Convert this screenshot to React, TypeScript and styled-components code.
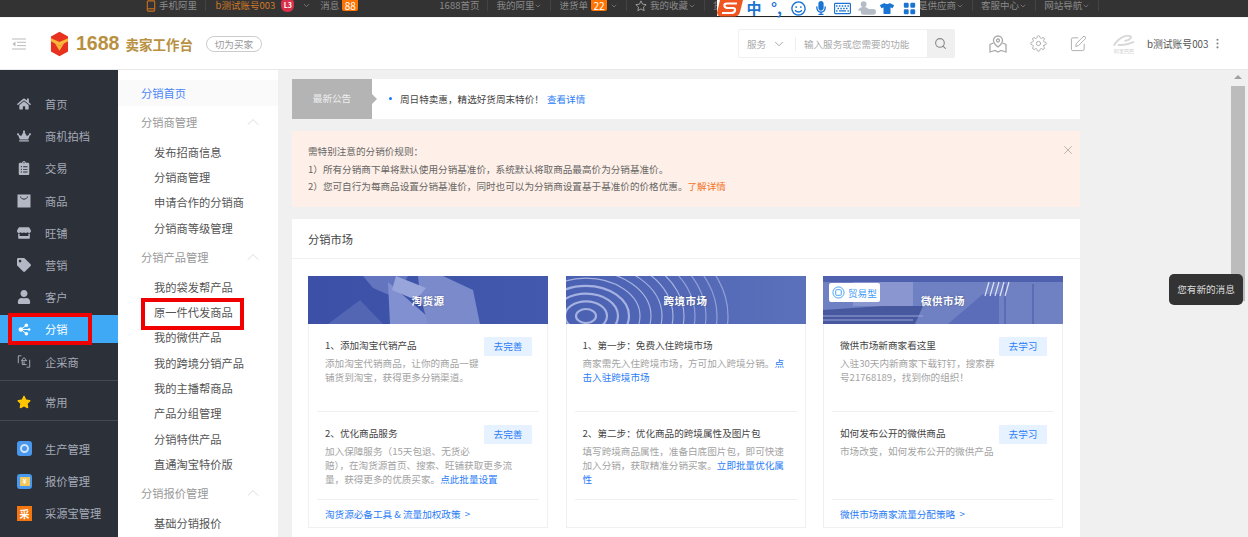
import React from 'react';
import styled, { createGlobalStyle } from 'styled-components';
import { FaHome, FaCrown, FaClipboardList, FaStore, FaTag, FaUser, FaStar, FaRegSmile, FaMicrophone, FaRegKeyboard, FaTshirt } from 'react-icons/fa';
import { BsGridFill } from 'react-icons/bs';
import { FiChevronDown, FiChevronUp, FiSearch, FiSettings, FiEdit, FiX, FiMoreVertical } from 'react-icons/fi';

const GlobalStyle = createGlobalStyle`
    html, body {
        margin: 0;
        padding: 0;
        height: 537px;
        overflow: hidden;
        background: #f0f0f0;
        font-family: "Noto Sans CJK SC", "Liberation Sans", sans-serif;
        font-size: 9.6px;
    }
    * { box-sizing: border-box; }
`;

function BagIcon() {
    return (
        <svg viewBox="0 0 14 14" width="14" height="14">
            <path d="M0.5 0.5h13v13h-13z" fill="currentColor" />
            <path d="M3.5 2.5c0.5 3.5 6.5 3.5 7 0" fill="none" stroke="#2c3039" strokeWidth="1" />
        </svg>
    );
}

function ShareIcon() {
    return (
        <svg viewBox="0 0 14 14" width="13" height="13" fill="#fff">
            <circle cx="3" cy="7" r="2.4" />
            <circle cx="9" cy="2.5" r="1.9" />
            <circle cx="9" cy="11.5" r="1.9" />
            <circle cx="12" cy="7" r="1.4" />
            <path d="M3 7L9 2.5M3 7L9 11.5M3 7H12" stroke="#fff" strokeWidth="1" />
        </svg>
    );
}

function BracketIcon() {
    return (
        <svg viewBox="0 0 16 16" width="15" height="15" fill="none" stroke="currentColor" strokeWidth="1">
            <path d="M5 1.5H1.5V10M11 14.5h3.5V6" />
            <path d="M8 3.5L5 7h6zM6 7.5v4h5M8 8v3" />
        </svg>
    );
}

const sideMain = [
    { label: '首页', icon: <FaHome /> },
    { label: '商机拍档', icon: <FaCrown /> },
    { label: '交易', icon: <FaClipboardList /> },
    { label: '商品', icon: <BagIcon /> },
    { label: '旺铺', icon: <FaStore /> },
    { label: '营销', icon: <FaTag /> },
    { label: '客户', icon: <FaUser /> },
    { label: '分销', icon: <ShareIcon />, active: true },
    { label: '企采商', icon: <BracketIcon /> },
];

const subGroups = [
    { title: '分销商管理', items: ['发布招商信息', '分销商管理', '申请合作的分销商', '分销商等级管理'] },
    { title: '分销产品管理', items: ['我的袋发帮产品', '原一件代发商品', '我的微供产品', '我的跨境分销产品', '我的主播帮商品', '产品分组管理', '分销特供产品', '直通淘宝特价版'] },
    { title: '分销报价管理', items: ['基础分销报价'] },
];

const ripples = [10, 21, 32, 43, 54, 65, 76, 87, 98, 109, 120, 131, 142];

const App: React.FC = () => {
    return (
        <Page>
            <GlobalStyle />
            <TopBar>
                <TopItem>
                    <PhoneMark viewBox="0 0 10 13" width="10" height="12">
                        <rect x="1" y="1" width="8" height="11" rx="1" />
                        <path d="M1 9.5h8" />
                    </PhoneMark>
                    手机阿里
                </TopItem>
                <AccountItem>
                    <OrangeText>b测试账号003</OrangeText>
                    <LevelBadge>L3</LevelBadge>
                    <AccountChevron size={9} />
                    消息
                    <CountBadge>88</CountBadge>
                </AccountItem>
                <TopSpacer />
                <TopItem>1688首页</TopItem>
                <TopItem>我的阿里<FiChevronDown size={8} /></TopItem>
                <TopItem>进货单<CountBadge>22</CountBadge><FiChevronDown size={8} /></TopItem>
                <TopItem>
                    <StarMark viewBox="0 0 14 14" width="12" height="12">
                        <path d="M7 1l1.8 3.900 4.200.5-3.100 2.900.8 4.200L7 10.400 3.300 12.500l.8-4.200L1 5.400l4.200-.5z" />
                    </StarMark>
                    我的收藏<FiChevronDown size={8} />
                </TopItem>
                <HiddenItem>货源采购</HiddenItem>
                <TopItem>我是供应商<FiChevronDown size={8} /></TopItem>
                <TopItem>客服中心<FiChevronDown size={8} /></TopItem>
                <TopItem>网站导航<FiChevronDown size={8} /></TopItem>
            </TopBar>

            <ImeBar>
                <ImeLogo viewBox="0 0 26 17" width="26" height="17">
                    <path d="M3 0H26L23 12Q22 16 18 16.500H4Q1 16.500 0 13Z" fill="#f0561f" />
                    <path d="M20 3.500H10Q7 3.500 7.500 6Q8 8 11 8H16Q18.500 8 18 10.500Q17.500 13 14 13H5" fill="none" stroke="#fff" strokeWidth="2.200" />
                </ImeLogo>
                <ImeSlot $width={24}><ImeChar>中</ImeChar></ImeSlot>
                <ImeSlot $width={21}><ImeChar>°,</ImeChar></ImeSlot>
                <ImeSlot $width={23}><FaRegSmile size={15} /></ImeSlot>
                <ImeSlot $width={22}><FaMicrophone size={14} /></ImeSlot>
                <ImeSlot $width={21}><FaRegKeyboard size={17} /></ImeSlot>
                <ImeSlot $width={27}>
                    <svg viewBox="0 0 20 14" width="19" height="14" fill="#b4bcc6">
                        <circle cx="7" cy="3" r="3" />
                        <path d="M1 10q1-4 6-4t6 4z" />
                        <rect x="4" y="8" width="16" height="6" rx="3" />
                    </svg>
                </ImeSlot>
                <ImeSlot $width={14}><FaTshirt size={15} /></ImeSlot>
                <ImeSlot $width={30}><BsGridFill size={13} /></ImeSlot>
            </ImeBar>

            <Header>
                <MenuToggle viewBox="0 0 14 12" width="14" height="12">
                    <path d="M0 1h14M5 4.300h9M5 7.600h9M0 11h14" stroke="#bbb" strokeWidth="1" />
                    <path d="M3.500 3.500L0.500 6l3 2.500z" fill="#bbb" />
                </MenuToggle>
                <svg viewBox="0 0 20 26" width="19" height="26">
                    <path d="M10 0L19 5V21L10 26L1 21V5Z" fill="#e6321f" />
                    <path d="M1 7L10 11L19 7V10L10 15L1 10Z" fill="#f6b73c" />
                    <path d="M5 12L10 20L15 12L10 15Z" fill="#f6b73c" />
                </svg>
                <Brand>1688</Brand>
                <BrandSub>卖家工作台</BrandSub>
                <SwitchTag>切为买家</SwitchTag>
                <SearchBox>
                    <SearchScope>服务<FiChevronDown size={14} /></SearchScope>
                    <SearchInput>输入服务或您需要的功能</SearchInput>
                    <SearchButton><FiSearch size={13} /></SearchButton>
                </SearchBox>
                <HeaderIcons>
                    <svg viewBox="0 0 18 18" width="18" height="18" fill="none" stroke="#aaa" strokeWidth="1">
                        <path d="M9 1a4.500 4.500 0 0 1 4.500 4.500C13.500 8.500 9 12 9 12S4.500 8.500 4.500 5.500A4.500 4.500 0 0 1 9 1z" />
                        <circle cx="9" cy="5.500" r="1.500" />
                        <path d="M4.500 8L1 9.500V17L6 15.500L9 17L12 15.500L17 17V9.500L13.500 8" />
                    </svg>
                    <FiSettings size={17} />
                    <FiEdit size={17} />
                </HeaderIcons>
                <AliLogo>
                    <svg viewBox="0 0 24 14" width="23" height="14" fill="none" stroke="#d8d8d8" strokeWidth="2">
                        <path d="M2 12C6 4 15 0 19 2C21 3 19 6 13 7M6 11C12 12 18 10 23 8" />
                    </svg>
                    <AliText>阿里巴巴</AliText>
                </AliLogo>
                <UserName>b测试账号003</UserName>
                <FiMoreVertical size={13} color="#888" />
            </Header>

            <Body>
                <SideNav>
                    {sideMain.map(item => (
                        <SideItem key={item.label} $active={item.active}>
                            <SideIcon>{item.icon}</SideIcon>
                            {item.label}
                        </SideItem>
                    ))}
                    <SideDivider $after={7} />
                    <SideItem>
                        <SideIcon $color="#ffc600"><FaStar /></SideIcon>
                        常用
                    </SideItem>
                    <SideDivider $after={14} />
                    <SideItem>
                        <AppTile $color="#4a97ee"><TileDot /></AppTile>
                        生产管理
                    </SideItem>
                    <SideItem>
                        <AppTile $color="#4a97ee"><TileBubble>¥</TileBubble></AppTile>
                        报价管理
                    </SideItem>
                    <SideItem>
                        <AppTile $color="#f5760f" $square>采</AppTile>
                        采源宝管理
                    </SideItem>
                </SideNav>

                <SubNav>
                    <SubActive>分销首页</SubActive>
                    {subGroups.map(group => (
                        <div key={group.title}>
                            <SubTitle>
                                {group.title}
                                <FiChevronUp size={20} color="#ccc" strokeWidth={0.8} />
                            </SubTitle>
                            {group.items.map(item => <SubItem key={item}>{item}</SubItem>)}
                        </div>
                    ))}
                </SubNav>

                <Content>
                    <Notice>
                        <NoticeTag>最新公告</NoticeTag>
                        <NoticeDot />
                        <span>周日特卖惠，精选好货周末特价！</span>
                        <NoticeLink>查看详情</NoticeLink>
                    </Notice>

                    <Alert>
                        <div>需特别注意的分销价规则：</div>
                        <div>1）所有分销商下单将默认使用分销基准价，系统默认将取商品最高价为分销基准价。</div>
                        <div>2）您可自行为每商品设置分销基准价，同时也可以为分销商设置基于基准价的价格优惠。<AlertLink>了解详情</AlertLink></div>
                        <AlertClose><FiX size={14} strokeWidth={1} /></AlertClose>
                    </Alert>

                    <Panel>
                        <PanelTitle>分销市场</PanelTitle>
                        <CardRow>
                            <Card>
                                <Banner $bg="linear-gradient(90deg, #3b50a6, #4259ad)">
                                    <BannerArt viewBox="0 0 240 48" preserveAspectRatio="none">
                                        <path d="M20 48L52 24L75 48Z" fill="#5266b4" />
                                        <path d="M55 0H100L88 22L65 12Z" fill="#6375bf" />
                                        <path d="M80 6L128 48H82Z" fill="#8190d0" />
                                        <path d="M110 0H135L165 14L172 48H120L112 20Z" fill="#7a8acb" />
                                        <path d="M88 0L118 12L108 24L84 14Z" fill="#98a5da" />
                                    </BannerArt>
                                    <BannerTitle>淘货源</BannerTitle>
                                </Banner>
                                <CardBody>
                                    <CardRowItem>
                                        <ActionButton>去完善</ActionButton>
                                        <ItemTitle>1、添加淘宝代销产品</ItemTitle>
                                        <ItemDesc>添加淘宝代销商品，让你的商品一键铺货到淘宝，获得更多分销渠道。</ItemDesc>
                                    </CardRowItem>
                                    <CardRowItem>
                                        <ActionButton>去完善</ActionButton>
                                        <ItemTitle>2、优化商品服务</ItemTitle>
                                        <ItemDesc>加入保障服务（15天包退、无货必赔），在淘货源首页、搜索、旺铺获取更多流量，获得更多的优质买家。<BlueLink>点此批量设置</BlueLink></ItemDesc>
                                    </CardRowItem>
                                    <CardFooter>淘货源必备工具 &amp; 流量加权政策 &nbsp;&gt;</CardFooter>
                                </CardBody>
                            </Card>

                            <Card>
                                <Banner $bg="linear-gradient(90deg, #4a60b2, #5c71bb)">
                                    <BannerArt viewBox="0 0 240 48" preserveAspectRatio="xMidYMid slice">
                                        {ripples.map(r => (
                                            <ellipse key={r} cx="20" cy="40" rx={r} ry={r * 0.7} fill="none" stroke="#c3ccef" strokeWidth={r < 50 ? 2.2 : 1.2} opacity={r > 100 ? 0.55 : 0.75} />
                                        ))}
                                    </BannerArt>
                                    <BannerTitle>跨境市场</BannerTitle>
                                </Banner>
                                <CardBody>
                                    <CardRowItem>
                                        <ItemTitle>1、第一步：免费入住跨境市场</ItemTitle>
                                        <ItemDesc>商家需先入住跨境市场，方可加入跨境分销。<BlueLink>点击入驻跨境市场</BlueLink></ItemDesc>
                                    </CardRowItem>
                                    <CardRowItem>
                                        <ItemTitle>2、第二步：优化商品的跨境属性及图片包</ItemTitle>
                                        <ItemDesc>填写跨境商品属性，准备白底图片包，即可快速加入分销，获取精准分销买家。<BlueLink>立即批量优化属性</BlueLink></ItemDesc>
                                    </CardRowItem>
                                    <CardFooter />
                                </CardBody>
                            </Card>

                            <Card>
                                <Banner $bg="#6f80c3">
                                    <BannerArt viewBox="0 0 240 48" preserveAspectRatio="none">
                                        <path d="M0 0H240V6H0Z" fill="#4f61ae" />
                                        <path d="M30 6H90V30H30Z" fill="#8996d0" />
                                        <path d="M0 34L60 30H100L92 48H0Z" fill="#47589f" />
                                        <path d="M125 48L160 18H176V48Z" fill="#5b6db8" />
                                        <path d="M182 8V48M210 8V48" stroke="#5566b0" strokeWidth="1.500" />
                                        <path d="M162 20L166 6M167 20L171 6M172 20L176 6M177 20L181 6M182 20L186 6" stroke="#dfe4f5" strokeWidth="1.200" />
                                        <path d="M0 40H100M0 44H90" stroke="#9aa6d9" strokeWidth="1" />
                                    </BannerArt>
                                    <BannerTitle>微供市场</BannerTitle>
                                    <TradeBadge>
                                        <svg viewBox="0 0 14 14" width="13" height="13" fill="none" stroke="#3f9cf5" strokeWidth="1">
                                            <circle cx="7" cy="7" r="6" />
                                            <rect x="4" y="4" width="6" height="6" rx="1" />
                                        </svg>
                                        贸易型
                                    </TradeBadge>
                                </Banner>
                                <CardBody>
                                    <CardRowItem>
                                        <ActionButton>去学习</ActionButton>
                                        <ItemTitle>微供市场新商家看这里</ItemTitle>
                                        <ItemDesc>入驻30天内新商家下载钉钉，搜索群号21768189，找到你的组织！</ItemDesc>
                                    </CardRowItem>
                                    <CardRowItem>
                                        <ActionButton>去学习</ActionButton>
                                        <ItemTitle>如何发布公开的微供商品</ItemTitle>
                                        <ItemDesc>市场改变，如何发布公开的微供产品</ItemDesc>
                                    </CardRowItem>
                                    <CardFooter>微供市场商家流量分配策略 &nbsp;&gt;</CardFooter>
                                </CardBody>
                            </Card>
                        </CardRow>
                    </Panel>
                </Content>

                <ScrollTrack>
                    <ScrollArrow />
                    <ScrollThumb />
                </ScrollTrack>
            </Body>

            <MessageTip>您有新的消息</MessageTip>
            <RedMark $left={8} $top={313} $width={84} $height={32} />
            <RedMark $left={141} $top={298} $width={103} $height={32} />
        </Page>
    );
};

export default App;

const Page = styled.div`
    position: relative;
    width: 1248px;
    height: 537px;
    overflow: hidden;
    display: flex;
    flex-direction: column;
`;

const TopBar = styled.div`
    height: 18px;
    flex: none;
    padding-left: 137.5px;
    background: #333;
    color: #8a8a8a;
    font-size: 9.5px;
    display: flex;
    align-items: flex-start;
    border-bottom: 1px solid #f4f4f4;
`;

const TopItem = styled.div`
    height: 11px;
    line-height: 11px;
    padding: 0 7.5px 0 8.5px;
    display: flex;
    align-items: center;
    white-space: nowrap;
    border-right: 1px solid #444;
`;

const AccountItem = styled(TopItem)`
    padding-left: 10px;
    border-right: none;
`;

const TopSpacer = styled.div`
    width: 62px;
`;

const HiddenItem = styled(TopItem)`
    width: 195.5px;
`;

const PhoneMark = styled.svg`
    margin-right: 3px;
    fill: none;
    stroke: #c8701e;
    stroke-width: 1.2;
`;

const StarMark = styled.svg`
    margin-right: 3px;
    fill: none;
    stroke: #aaa;
    stroke-width: 1;
`;

const AccountChevron = styled(FiChevronDown)`
    margin: 0 9px 0 8px;
`;

const OrangeText = styled.span`
    color: #cf7a26;
`;

const LevelBadge = styled.span`
    width: 13px;
    height: 12px;
    margin-left: 6px;
    background: #d92f4a;
    color: #fff;
    font-size: 7px;
    font-weight: 700;
    text-align: center;
    border-radius: 2px 2px 6px 6px;
`;

const CountBadge = styled.span`
    height: 11px;
    line-height: 11px;
    padding: 0 2.5px;
    margin: 0 3px;
    background: #ff7300;
    color: #fff;
    font-size: 10px;
    border-radius: 0 0 2px 2px;
`;

const ImeBar = styled.div`
    position: absolute;
    left: 717px;
    top: 0;
    width: 203px;
    height: 16px;
    padding-left: 25px;
    display: flex;
    align-items: center;
    background: #fff;
    color: #1a74d2;
    box-shadow: 0 1px 0 #222;
`;

const ImeLogo = styled.svg`
    position: absolute;
    left: 0;
    top: 0;
`;

const ImeSlot = styled.span<{ $width: number }>`
    width: ${p => p.$width}px;
    flex: none;
    display: flex;
    align-items: center;
    justify-content: center;
`;

const ImeChar = styled.span`
    font-size: 15px;
    font-weight: 700;
    line-height: 16px;
`;

const Header = styled.div`
    height: 52px;
    flex: none;
    background: #fff;
    border-bottom: 1px solid #e8e8e8;
    display: flex;
    align-items: center;
    padding-left: 12px;
`;

const MenuToggle = styled.svg`
    margin-right: 24px;
`;

const Brand = styled.span`
    margin-left: 7px;
    font-family: "Liberation Sans", sans-serif;
    font-size: 19.5px;
    font-weight: 700;
    color: #b8903f;
`;

const BrandSub = styled.span`
    margin-left: 6px;
    font-size: 13.5px;
    font-weight: 700;
    color: #b8903f;
`;

const SwitchTag = styled.span`
    margin-left: 13px;
    width: 56px;
    height: 16px;
    line-height: 14px;
    text-align: center;
    color: #999;
    border: 1px solid #ccc;
    border-radius: 8px;
`;

const SearchBox = styled.div`
    margin-left: 476px;
    width: 217px;
    height: 29px;
    display: flex;
    align-items: center;
    color: #aaa;
    border: 1px solid #f0f0f0;
    border-radius: 2px;
`;

const SearchScope = styled.div`
    width: 57px;
    padding-left: 8px;
    display: flex;
    align-items: center;
    gap: 6px;
    border-right: 1px solid #eee;
    line-height: 12px;
    svg { color: #999; stroke-width: 1.5; }
`;

const SearchInput = styled.div`
    flex: 1;
    padding-left: 8px;
`;

const SearchButton = styled.div`
    width: 27px;
    height: 100%;
    background: #f0f0f0;
    color: #888;
    display: flex;
    align-items: center;
    justify-content: center;
`;

const HeaderIcons = styled.div`
    margin-left: 34px;
    display: flex;
    align-items: center;
    gap: 23px;
    color: #aaa;
    svg { stroke-width: 1.3; }
`;

const AliLogo = styled.div`
    margin-left: 25px;
    width: 24px;
    display: flex;
    flex-direction: column;
    align-items: center;
`;

const AliText = styled.span`
    font-size: 5px;
    line-height: 6px;
    color: #ccc;
`;

const UserName = styled.span`
    margin: 0 3px 0 11px;
    color: #555;
    font-size: 9.8px;
`;

const Body = styled.div`
    flex: 1;
    min-height: 0;
    display: flex;
`;

const SideNav = styled.nav`
    width: 118px;
    flex: none;
    padding-top: 20px;
    background: #2c3039;
    color: #a5aab7;
    font-size: 11.25px;
`;

const SideItem = styled.div<{ $active?: boolean }>`
    height: 28px;
    margin-bottom: 4.2px;
    padding-left: 17px;
    display: flex;
    align-items: center;
    background: ${p => (p.$active ? '#3fa9f5' : 'transparent')};
    color: ${p => (p.$active ? '#fff' : 'inherit')};
`;

const SideIcon = styled.span<{ $color?: string }>`
    width: 14px;
    margin-right: 14px;
    display: flex;
    justify-content: center;
    font-size: 14px;
    color: ${p => p.$color || '#b4b8c4'};
`;

const SideDivider = styled.div<{ $after: number }>`
    height: 1px;
    margin: 1px 0 ${p => p.$after}px;
    background: #45484f;
`;

const AppTile = styled.span<{ $color: string; $square?: boolean }>`
    width: 15px;
    height: 15px;
    margin-right: 13px;
    display: flex;
    align-items: center;
    justify-content: center;
    background: ${p => p.$color};
    border-radius: ${p => (p.$square ? '0' : '3px')};
    color: #fff;
    font-size: 10px;
    font-weight: 700;
    line-height: 15px;
`;

const TileDot = styled.span`
    width: 9px;
    height: 9px;
    border: 2px solid #cfe3fb;
    border-radius: 50%;
`;

const TileBubble = styled.span`
    width: 10px;
    height: 9px;
    background: #f3c65a;
    color: #fff;
    font-size: 7px;
    line-height: 9px;
    text-align: center;
`;

const SubNav = styled.aside`
    width: 160px;
    flex: none;
    padding-top: 10px;
    background: #fff;
    font-size: 11.25px;
    overflow: hidden;
`;

const SubActive = styled.div`
    height: 26px;
    margin-bottom: 1px;
    padding-left: 23px;
    line-height: 26px;
    background: #fafafa;
    color: #4a86f7;
`;

const SubTitle = styled.div`
    height: 25.3px;
    margin: 3.5px 0 5px;
    padding: 0 15px 0 23px;
    display: flex;
    align-items: center;
    justify-content: space-between;
    color: #999;
`;

const SubItem = styled.div`
    height: 25.3px;
    line-height: 25.3px;
    padding-left: 36px;
    color: #555;
`;

const Content = styled.main`
    width: 816px;
    flex: none;
    padding: 9px 14px 0;
    overflow: hidden;
`;

const Notice = styled.div`
    height: 40px;
    padding-bottom: 1px;
    display: flex;
    align-items: center;
    background: #fff;
    color: #444;
`;

const NoticeTag = styled.div`
    position: relative;
    width: 80px;
    height: 40px;
    line-height: 38px;
    text-align: center;
    background: #b4b4b4;
    color: #eee;
    &::after {
        content: '';
        position: absolute;
        left: 80px;
        top: 15px;
        border: 5px solid transparent;
        border-left-color: #b4b4b4;
    }
`;

const NoticeDot = styled.span`
    width: 3px;
    height: 3px;
    margin: 0 8px 0 17px;
    border-radius: 50%;
    background: #1677ff;
`;

const NoticeLink = styled.span`
    margin-left: 3px;
    color: #2a7cf6;
`;

const Alert = styled.div`
    position: relative;
    height: 76px;
    margin-top: 12px;
    padding: 12px 16px;
    line-height: 17.5px;
    background: #fef0e8;
    color: #666;
`;

const AlertLink = styled.span`
    color: #f5701f;
`;

const AlertClose = styled.span`
    position: absolute;
    right: 5px;
    top: 12px;
    color: #888;
`;

const Panel = styled.section`
    margin-top: 12px;
    background: #fff;
    padding-bottom: 30px;
`;

const PanelTitle = styled.div`
    height: 40px;
    padding-left: 16px;
    line-height: 41px;
    font-size: 11.25px;
    color: #444;
    border-bottom: 1px solid #f0f0f0;
`;

const CardRow = styled.div`
    padding: 17px 18px 0 16px;
    display: grid;
    grid-template-columns: repeat(3, 240px);
    column-gap: 17.5px;
`;

const Card = styled.article`
    height: 252px;
    border: 1px solid #f0f0f0;
    display: flex;
    flex-direction: column;
`;

const Banner = styled.div<{ $bg: string }>`
    position: relative;
    height: 48px;
    flex: none;
    margin: -1px -1px 0;
    display: flex;
    align-items: center;
    justify-content: center;
    overflow: hidden;
    background: ${p => p.$bg};
`;

const BannerArt = styled.svg`
    position: absolute;
    inset: 0;
    width: 100%;
    height: 100%;
`;

const BannerTitle = styled.span`
    position: relative;
    color: #fff;
    font-size: 10.5px;
    font-weight: 700;
    letter-spacing: 0.5px;
    text-shadow: 0 0 2px rgba(0, 0, 0, 0.3);
`;

const TradeBadge = styled.span`
    position: absolute;
    left: 6px;
    top: 7px;
    width: 51px;
    height: 19px;
    display: flex;
    align-items: center;
    gap: 3px;
    padding-left: 3px;
    background: #fff;
    border-radius: 2px;
    color: #3f9cf5;
`;

const CardBody = styled.div`
    flex: 1;
    display: flex;
    flex-direction: column;
`;

const CardRowItem = styled.div`
    height: 88px;
    margin: 0 8px;
    padding: 13px 8px 0 8px;
    border-bottom: 1px solid #f0f0f0;
`;

const ActionButton = styled.span`
    float: right;
    width: 48px;
    height: 19px;
    margin: 0 -1px 6px 0;
    line-height: 19px;
    text-align: center;
    color: #2a7cf6;
    background: #e6f2ff;
    border-radius: 1px;
`;

const ItemTitle = styled.div`
    line-height: 17px;
    color: #444;
`;

const ItemDesc = styled.div`
    margin-top: 2px;
    line-height: 14px;
    color: #a3a3a3;
`;

const BlueLink = styled.span`
    color: #2a7cf6;
`;

const CardFooter = styled.div`
    flex: 1;
    margin: 0 8px;
    padding-left: 8px;
    line-height: 28px;
    color: #2a7cf6;
`;

const ScrollTrack = styled.div`
    margin-left: 137px;
    width: 14px;
    flex: none;
    padding-top: 5px;
    display: flex;
    flex-direction: column;
    align-items: center;
`;

const ScrollArrow = styled.div`
    border: 4px solid transparent;
    border-top: 0;
    border-bottom: 4px solid #a0a0a0;
`;

const ScrollThumb = styled.div`
    width: 14px;
    height: 215px;
    margin-top: 7px;
    background: #bcbcbc;
`;

const MessageTip = styled.div`
    position: absolute;
    left: 1169px;
    top: 274px;
    width: 74px;
    height: 31px;
    line-height: 31px;
    text-align: center;
    background: #333;
    color: #ddd;
    border-radius: 5px;
`;

const RedMark = styled.div<{ $left: number; $top: number; $width: number; $height: number }>`
    position: absolute;
    left: ${p => p.$left}px;
    top: ${p => p.$top}px;
    width: ${p => p.$width}px;
    height: ${p => p.$height}px;
    border: 4px solid #f00000;
`;
